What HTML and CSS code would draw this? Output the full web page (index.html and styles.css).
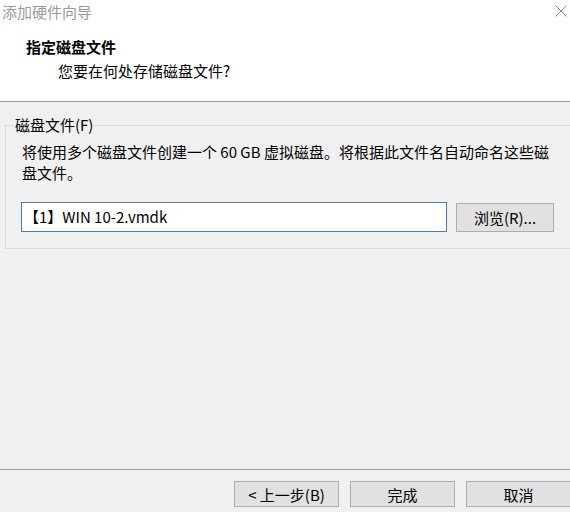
FILE: index.html
```html
<!DOCTYPE html>
<html lang="zh-CN">
<head>
<meta charset="utf-8">
<title>添加硬件向导</title>
<link rel="stylesheet" href="styles.css">
</head>
<body>
<div class="window">
  <div class="top">
    <div class="titlebar">
      <span class="wtitle">添加硬件向导</span>
      <svg class="close" width="12" height="12" viewBox="0 0 12 12"><path d="M0.5 0.5L11.5 11.5M11.5 0.5L0.5 11.5" stroke="#8a8a8a" stroke-width="1" fill="none"/></svg>
    </div>
    <div class="head">
      <div class="h-title">指定磁盘文件</div>
      <div class="h-sub">您要在何处存储磁盘文件?</div>
    </div>
  </div>
  <div class="main">
    <fieldset class="group">
      <legend class="legend">磁盘文件(F)</legend>
      <p class="desc">将使用多个磁盘文件创建一个 60 GB 虚拟磁盘。将根据此文件名自动命名这些磁盘文件。</p>
      <div class="filerow">
        <div class="input">【1】WIN 10-2.vmdk</div>
        <button class="btn browse">浏览(R)...</button>
      </div>
    </fieldset>
  </div>
  <div class="footer">
    <button class="btn act">&lt; 上一步(B)</button>
    <button class="btn act">完成</button>
    <button class="btn act">取消</button>
  </div>
</div>
</body>
</html>
```
FILE: styles.css
```css
html, body {
  margin: 0;
  padding: 0;
  background: #f0f0f0;
  overflow: hidden;
}
body {
  font-family: "Noto Sans CJK SC", "Noto Sans", sans-serif;
  font-size: 15px;
  color: #000;
}
.window {
  width: 570px;
  height: 512px;
  display: flex;
  flex-direction: column;
  overflow: hidden;
}
.top {
  background: #fff;
  height: 101px;
  border-bottom: 1px solid #a0a0a0;
  flex: none;
}
.titlebar {
  display: flex;
  justify-content: space-between;
  align-items: flex-start;
  height: 24px;
}
.wtitle {
  color: #9a9a9a;
  line-height: 24px;
  padding-left: 2px;
}
.close {
  margin: 5px 3px 0 0;
}
.head {
  padding: 12px 0 0 26px;
}
.h-title {
  font-weight: bold;
  line-height: 22px;
}
.h-sub {
  line-height: 24px;
  margin-top: 1px;
  padding-left: 32px;
}
.main {
  flex: 1;
  padding: 13px 0 0 5px;
}
.group {
  margin: 0 -30px 0 0;
  border: 1px solid #dcdcdc;
  padding: 0 16px 16px 16px;
  min-width: 0;
}
.legend {
  padding: 0 1px;
  margin-left: -8px;
  line-height: 20px;
}
.desc {
  margin: 6px 0 0 0;
  line-height: 21px;
  width: 540px;
}
.filerow {
  display: flex;
  align-items: flex-end;
  margin-top: 19px;
  margin-left: -1px;
}
.input {
  box-sizing: border-box;
  width: 426px;
  height: 30px;
  background: #fff;
  border: 1px solid #4d7ab5;
  line-height: 28px;
  padding-left: 2px;
}
.btn {
  font-family: inherit;
  font-size: 15px;
  color: #000;
  background: #e1e1e1;
  border: 1px solid #adadad;
  box-sizing: border-box;
  padding: 0;
  margin: 0;
}
.browse {
  width: 98px;
  height: 29px;
  margin-left: 9px;
}
.footer {
  flex: none;
  height: 43px;
  border-top: 1px solid #a0a0a0;
  display: flex;
  gap: 11px;
  padding: 11px 0 0 234px;
  box-sizing: border-box;
}
.act {
  width: 105px;
  height: 26px;
  flex: none;
}
```
